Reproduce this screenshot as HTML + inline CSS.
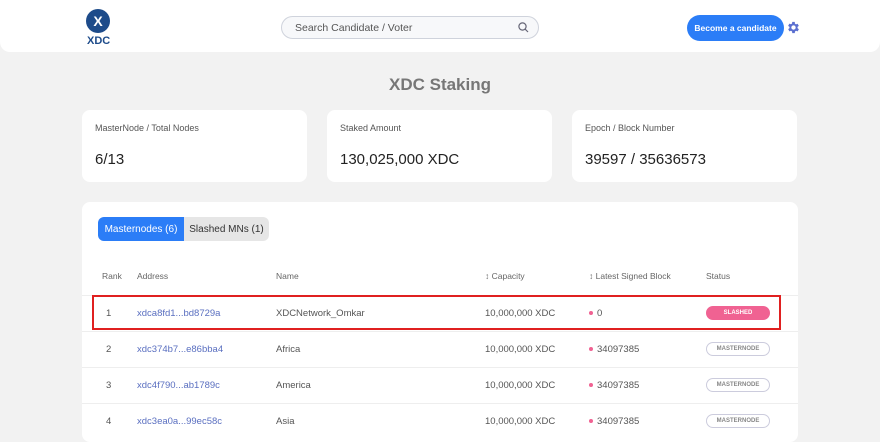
<!DOCTYPE html>
<html><head><style>
*{box-sizing:border-box;margin:0;padding:0}
body{width:880px;height:430px;overflow:hidden;background:#f2f2f2;font-family:"Liberation Sans",sans-serif;position:relative;color:#333}
.hdr{position:absolute;left:0;top:0;width:880px;height:52px;background:#fff;border-radius:0 0 10px 10px}
.logo{position:absolute;left:86px;top:9px;width:24px;height:24px;border-radius:50%;background:#1d4b8a;color:#fff;font-weight:bold;font-size:14px;display:flex;align-items:center;justify-content:center}
.logot{position:absolute;left:87px;top:35px;font-size:11px;color:#1d4b8a;font-weight:bold}
.search{position:absolute;left:281px;top:16px;width:258px;height:23px;border:1px solid #cfd3dc;border-radius:12px;background:#f7f8fa;font-size:10.5px;color:#555;padding:0 0 0 13px;display:flex;align-items:center}
.btn{position:absolute;left:687px;top:15px;width:97px;height:26px;border-radius:13px;background:#2b7df7;color:#fff;font-size:8.5px;font-weight:bold;display:flex;align-items:center;justify-content:center}
h1{position:absolute;left:0;width:880px;top:75px;text-align:center;font-size:17px;color:#777;font-weight:bold}
.card{position:absolute;top:110px;width:225px;height:72px;background:#fff;border-radius:8px}
.card .l{position:absolute;left:13px;top:13px;font-size:9px;color:#555}
.card .v{position:absolute;left:13px;top:41px;font-size:15px;color:#222}
.panel{position:absolute;left:82px;top:202px;width:716px;height:240px;background:#fff;border-radius:8px}
.tab1,.tab2{position:absolute;top:217px;height:24px;font-size:10px;display:flex;align-items:center;justify-content:center}
.tab1{left:98px;width:86px;background:#2b7df7;color:#fff;border-radius:6px 0 0 6px}
.tab2{left:184px;width:85px;background:#e6e6e6;color:#333;border-radius:0 6px 6px 0}
.th{position:absolute;top:271px;font-size:8.5px;color:#666}
.row{position:absolute;left:82px;width:716px;height:36px;border-top:1px solid #eee}
.c{position:absolute;font-size:9.5px;color:#555;top:12px}
.a{color:#5a6fc0}
.dot{display:inline-block;width:4px;height:4px;border-radius:50%;background:#f06292;margin-right:4px;vertical-align:middle}
.st{position:absolute;left:624px;top:10px;width:64px;height:14px;border-radius:7px;border:1px solid #ccd;font-size:6px;font-weight:bold;color:#888;display:flex;align-items:center;justify-content:center}
.sl{background:#f06292;border-color:#f06292;color:#fff}
.red{position:absolute;left:92px;top:295px;width:689px;height:35px;border:2px solid #e02020}
</style></head><body>
<div class="hdr"></div>
<div class="logo">X</div><div class="logot">XDC</div>
<div class="search">Search Candidate / Voter
<svg style="position:absolute;right:9px;top:5px" width="11" height="11" viewBox="0 0 11 11"><circle cx="4.5" cy="4.5" r="3.6" fill="none" stroke="#667" stroke-width="1.2"/><path d="M7.2 7.2L10 10" stroke="#667" stroke-width="1.2"/></svg></div>
<div class="btn">Become a candidate</div>
<svg style="position:absolute;left:786px;top:20px" width="15" height="15" viewBox="0 0 24 24"><path fill="#5b6fd0" fill-rule="evenodd" d="M19.4 13a7.5 7.5 0 000-2l2.1-1.6-2-3.5-2.5 1a7.6 7.6 0 00-1.7-1L15 3h-4l-.4 2.8a7.6 7.6 0 00-1.7 1l-2.5-1-2 3.5L6.6 11a7.5 7.5 0 000 2l-2.1 1.6 2 3.5 2.5-1c.5.4 1.1.7 1.7 1L11 21h4l.4-2.8c.6-.3 1.2-.6 1.7-1l2.5 1 2-3.5zM13 15.5a3.5 3.5 0 110-7 3.5 3.5 0 010 7z" transform="translate(-1 0)"/></svg>
<h1>XDC Staking</h1>
<div class="card" style="left:82px"><div class="l">MasterNode / Total Nodes</div><div class="v">6/13</div></div>
<div class="card" style="left:327px"><div class="l">Staked Amount</div><div class="v">130,025,000 XDC</div></div>
<div class="card" style="left:572px"><div class="l">Epoch / Block Number</div><div class="v">39597 / 35636573</div></div>
<div class="panel"></div>
<div class="tab1">Masternodes (6)</div><div class="tab2">Slashed MNs (1)</div>
<div class="th" style="left:102px">Rank</div>
<div class="th" style="left:137px">Address</div>
<div class="th" style="left:276px">Name</div>
<div class="th" style="left:485px">↕ Capacity</div>
<div class="th" style="left:589px">↕ Latest Signed Block</div>
<div class="th" style="left:706px">Status</div>
<div class="row" style="top:295px"><div class="c" style="left:24px">1</div><div class="c a" style="left:55px">xdca8fd1...bd8729a</div><div class="c" style="left:194px">XDCNetwork_Omkar</div><div class="c" style="left:403px">10,000,000 XDC</div><div class="c" style="left:507px"><span class="dot"></span>0</div><div class="st sl">SLASHED</div></div>
<div class="row" style="top:331px"><div class="c" style="left:24px">2</div><div class="c a" style="left:55px">xdc374b7...e86bba4</div><div class="c" style="left:194px">Africa</div><div class="c" style="left:403px">10,000,000 XDC</div><div class="c" style="left:507px"><span class="dot"></span>34097385</div><div class="st">MASTERNODE</div></div>
<div class="row" style="top:367px"><div class="c" style="left:24px">3</div><div class="c a" style="left:55px">xdc4f790...ab1789c</div><div class="c" style="left:194px">America</div><div class="c" style="left:403px">10,000,000 XDC</div><div class="c" style="left:507px"><span class="dot"></span>34097385</div><div class="st">MASTERNODE</div></div>
<div class="row" style="top:403px"><div class="c" style="left:24px">4</div><div class="c a" style="left:55px">xdc3ea0a...99ec58c</div><div class="c" style="left:194px">Asia</div><div class="c" style="left:403px">10,000,000 XDC</div><div class="c" style="left:507px"><span class="dot"></span>34097385</div><div class="st">MASTERNODE</div></div>
<div class="red"></div>
</body></html>
